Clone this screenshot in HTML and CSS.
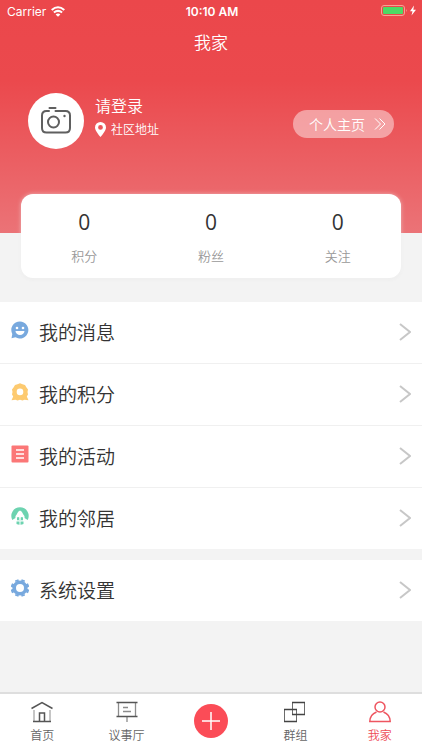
FILE: index.html
```html
<!DOCTYPE html>
<html lang="zh-CN">
<head>
    <meta charset="UTF-8">
    <meta name="viewport" content="width=device-width, initial-scale=1.0">
    <title>我家</title>
    <link rel="stylesheet" href="styles.css">
</head>
<body>

<header class="header">
    <div class="status-bar">
        <div class="status-left">
            <span>Carrier</span>
            <svg width="14" height="11" viewBox="0 0 14 11" fill="none" stroke="#fff" stroke-width="2">
                <path d="M0.700 4Q7-1.500 13.300 4"/>
                <path d="M2.900 6.600Q7 3.100 11.100 6.600"/>
                <path d="M7 10.800L4.600 8.400Q7 6.600 9.400 8.400Z" fill="#fff" stroke="none"/>
            </svg>
        </div>
        <strong class="status-time">10:10 AM</strong>
        <div class="status-right">
            <svg width="36" height="12" viewBox="0 0 36 12">
                <rect x="0.5" y="0.5" width="23" height="10" rx="2.5" fill="none" stroke="#f6a293"/>
                <rect x="2" y="2" width="20" height="7" rx="1" fill="#4cd964"/>
                <path d="M25 4q1.500 1.500 0 3z" fill="#f6a293"/>
                <path d="M33 0.500L29 6.200h2.500L30.500 10.500L35 4.700h-2.700z" fill="#fff"/>
            </svg>
        </div>
    </div>
    <h1>我家</h1>

    <div class="profile">
        <button class="avatar" aria-label="头像">
            <svg width="32" height="28" viewBox="0 0 32 28" fill="none" stroke="#5f5f5f" stroke-width="2" stroke-linecap="round">
                <path d="M9 4H6.500Q2 4 2 8.500v12.500q0 4.500 4.500 4.500h19q4.500 0 4.500-4.500V8.500Q30 4 25.500 4H15.500"/>
                <path d="M9.500 1h6"/>
                <circle cx="13.500" cy="15" r="5.500"/>
                <circle cx="24.500" cy="9" r="1.200" fill="#5f5f5f" stroke="none"/>
            </svg>
        </button>
        <div class="profile-info">
            <a href="#" class="login">请登录</a>
            <div class="address">
                <svg width="11" height="15" viewBox="0 0 11 15">
                    <path fill="#fff" fill-rule="evenodd" d="M5.500 0A5.500 5.500 0 0 0 0 5.500C0 9 5.500 15 5.500 15S11 9 11 5.500A5.500 5.500 0 0 0 5.500 0zM5.500 3a2.400 2.400 0 1 1 0 4.800a2.400 2.400 0 0 1 0-4.800z"/>
                </svg>
                <span>社区地址</span>
            </div>
        </div>
        <a href="#" class="home-link">
            个人主页
            <svg width="12" height="12" viewBox="0 0 12 12" fill="none" stroke="#fff">
                <path d="M1 0.500L6.500 6L1 11.500M5.500 0.500L11 6L5.500 11.500"/>
            </svg>
        </a>
    </div>
</header>

<main>
    <section class="stats">
        <div class="stat"><span class="stat-num">0</span><span class="stat-name">积分</span></div>
        <div class="stat"><span class="stat-num">0</span><span class="stat-name">粉丝</span></div>
        <div class="stat"><span class="stat-num">0</span><span class="stat-name">关注</span></div>
    </section>

    <nav class="menu">
        <a href="#">
            <svg class="icon" viewBox="0 0 18 18">
                <path fill="#78a9de" d="M9 0.500a8.500 8.500 0 1 1-4.500 15.800L0.500 17.300L1.300 13A8.500 8.500 0 0 1 9 0.500z"/>
                <circle cx="6" cy="7" r="1.300" fill="#fff"/>
                <circle cx="12" cy="7" r="1.300" fill="#fff"/>
                <path fill="#fff" d="M4.500 10h9a4.500 4 0 0 1-9 0z"/>
            </svg>
            <span>我的消息</span>
            <svg class="arrow" viewBox="0 0 12 18"><path d="M1 1L11 9L1 17"/></svg>
        </a>
        <a href="#">
            <svg class="icon" viewBox="0 0 18 18">
                <path fill="#fdca70" fill-rule="evenodd" d="M6.500 1.300L9 0.300L11.500 1.300L14 2L15.300 4.300L17 6.500L16.500 9L17 11.500L15.800 13.500L17.500 17.300L13.500 16.800L11.500 17.500L9 16.800L6.500 17.500L4.500 16.800L0.500 17.300L2.200 13.500L1 11.500L1.500 9L1 6.500L2.700 4.300L4 2zM9 5.600a3.300 3.300 0 1 0 0 6.600a3.300 3.300 0 0 0 0-6.600z"/>
            </svg>
            <span>我的积分</span>
            <svg class="arrow" viewBox="0 0 12 18"><path d="M1 1L11 9L1 17"/></svg>
        </a>
        <a href="#">
            <svg class="icon" viewBox="0 0 18 18">
                <rect x="0.500" y="0.500" width="17" height="17" rx="1" fill="#fb7777"/>
                <path stroke="#fff" stroke-width="1.300" d="M5 5h8M5 9h8M5 13h8"/>
            </svg>
            <span>我的活动</span>
            <svg class="arrow" viewBox="0 0 12 18"><path d="M1 1L11 9L1 17"/></svg>
        </a>
        <a href="#">
            <svg class="icon" viewBox="0 0 18 18">
                <path fill="#6dd3b0" d="M1.300 13A8.700 8.700 0 1 1 16.700 13L13.500 11Q14 9 12.300 7.500Q11 4 9 3.500Q7 4 5.700 7.500Q4 9 4.500 11z"/>
                <path fill="#6dd3b0" d="M6 10.500Q7 9.500 8.300 10.500V13H9.700V10.500Q11 9.500 12 10.500V13.200H6zM5.500 14.500H8.500V17.800Q7 17.800 5.500 17zM9.500 14.500H12.500V17Q11 17.800 9.500 17.800z"/>
            </svg>
            <span>我的邻居</span>
            <svg class="arrow" viewBox="0 0 12 18"><path d="M1 1L11 9L1 17"/></svg>
        </a>
    </nav>

    <nav class="menu">
        <a href="#">
            <svg class="icon" viewBox="0 0 18 18">
                <circle cx="9" cy="9" r="5.800" fill="none" stroke="#78a9de" stroke-width="3.600"/>
                <path stroke="#78a9de" stroke-width="3.600" d="M6.200 2.500L5.600 0.800M11.800 2.500L12.400 0.800M6.200 15.500L5.600 17.200M11.800 15.500L12.400 17.200M2.500 7L0.300 6M2.500 11.500L0.300 12.500M15.500 7L17.700 6M15.500 11.500L17.700 12.500"/>
            </svg>
            <span>系统设置</span>
            <svg class="arrow" viewBox="0 0 12 18"><path d="M1 1L11 9L1 17"/></svg>
        </a>
    </nav>
</main>

<nav class="tab-bar">
    <a href="#">
        <svg viewBox="0 0 24 24" fill="none" stroke="#8c8c8c">
            <path d="M4 10v12M20 10v12"/>
            <path stroke="#555" stroke-width="1.500" d="M1.500 8.500L12 2.500L22.500 8.500M3 21.500h18M9.500 21v-8h5v8"/>
        </svg>
        <span>首页</span>
    </a>
    <a href="#">
        <svg viewBox="0 0 24 24" fill="none" stroke="#8c8c8c">
            <path d="M3.500 3v13M20.500 3v13M8 7.500h5M8 11.500h8M12 16v6" stroke-width="1.300"/>
            <path stroke="#555" stroke-width="1.500" d="M1.500 2.500h21M1.500 16.500h21"/>
        </svg>
        <span>议事厅</span>
    </a>
    <a href="#" class="add" aria-label="发布">
        <svg viewBox="0 0 34 34">
            <circle cx="17" cy="17" r="17" fill="#fb4c57"/>
            <path stroke="#fff" stroke-width="1.500" d="M8 17h18M17 8v18"/>
        </svg>
    </a>
    <a href="#">
        <svg viewBox="0 0 24 24" fill="none" stroke="#6c6c6c">
            <path d="M9.500 2v13M21.500 2v13M1.500 9v13M13.500 9v13"/>
            <path stroke="#444" stroke-width="1.500" d="M9 2.500h13M9 14.500h13M1 9.500h13M1 21.500h13"/>
        </svg>
        <span>群组</span>
    </a>
    <a href="#" class="active">
        <svg viewBox="0 0 24 24" fill="none" stroke="#ee5560" stroke-width="1.500">
            <circle cx="12" cy="7" r="5"/>
            <path d="M8.500 12Q2 14.500 1.800 21.500H22.200Q22 14.500 15.500 12"/>
        </svg>
        <span>我家</span>
    </a>
</nav>

</body>
</html>
```
FILE: styles.css
```css
* {
    box-sizing: border-box;
}

body {
    background-color: #f3f3f3;
    color: #333;
    font-family: "Noto Sans CJK SC", sans-serif;
    font-weight: 350;
    margin: 0;
    min-height: 100vh;
    display: flex;
    flex-direction: column;
}

a {
    color: inherit;
    text-decoration: none;
}

svg {
    display: block;
    flex: none;
}

.header {
    background: linear-gradient(#eb474b 0, #eb494d 35%, #eb7377 100%);
    color: #fff;
    height: 233px;
}

.status-bar {
    display: grid;
    grid-template-columns: 1fr auto 1fr;
    align-items: center;
    height: 22px;
    padding: 0 5px 0 7px;
    font-family: Inter, sans-serif;
    font-size: 12px;
    font-weight: 400;
}

.status-left {
    display: flex;
    align-items: center;
    gap: 5px;
}

.status-time {
    font-weight: 600;
}

.status-right {
    justify-self: end;
}

h1 {
    margin: 0;
    font-size: 17px;
    font-weight: 350;
    line-height: 40px;
    text-align: center;
}

.profile {
    display: flex;
    align-items: center;
    padding: 31px 28px 0;
}

.avatar {
    display: flex;
    align-items: center;
    justify-content: center;
    width: 56px;
    height: 56px;
    padding: 0;
    border: none;
    border-radius: 50%;
    background-color: #fff;
}

.profile-info {
    flex: 1;
    margin-left: 11px;
    padding-bottom: 8px;
}

.login {
    display: block;
    font-size: 16px;
    line-height: 24px;
}

.address {
    display: flex;
    align-items: center;
    gap: 5px;
    font-size: 12px;
    line-height: 24px;
}

.home-link {
    display: flex;
    align-items: center;
    gap: 9px;
    height: 28px;
    margin-top: 6px;
    padding: 0 8px 0 16px;
    border-radius: 14px;
    background-color: rgba(255, 255, 255, 0.45);
    font-size: 14px;
}

.stats {
    position: relative;
    display: flex;
    height: 84px;
    margin: -39px 21px 24px;
    padding-top: 14px;
    border-radius: 12px;
    background-color: #fff;
    box-shadow: 0 0 4px rgba(255, 255, 255, 0.5), 0 1px 4px rgba(0, 0, 0, 0.05);
}

.stat {
    flex: 1;
    text-align: center;
}

.stat-num {
    display: block;
    font-family: "Open Sans", sans-serif;
    font-size: 21px;
    font-weight: 400;
    line-height: 28px;
}

.stat-name {
    display: block;
    margin-top: 10px;
    color: #999;
    font-size: 13px;
    line-height: 20px;
}

.menu {
    margin-bottom: 11px;
    background-color: #fff;
}

.menu a {
    display: flex;
    align-items: center;
    height: 61px;
    padding: 0 11px 2px;
    font-size: 19px;
}

.menu a + a {
    height: 62px;
    border-top: 1px solid #f0f0f0;
}

.menu span {
    flex: 1;
    margin-left: 10px;
}

.icon {
    width: 18px;
    height: 18px;
    margin-bottom: 4px;
}

.arrow {
    width: 12px;
    height: 18px;
    fill: none;
    stroke: #c7c7c7;
    stroke-width: 2;
}

.tab-bar {
    display: flex;
    height: 58px;
    margin-top: auto;
    border-top: 2px solid #dedede;
    background-color: #fff;
    color: #666;
    font-size: 12px;
    line-height: 18px;
}

.tab-bar a {
    flex: 1;
    display: flex;
    flex-direction: column;
    align-items: center;
    padding-top: 6px;
    gap: 2px;
}

.tab-bar svg {
    width: 24px;
    height: 24px;
}

.tab-bar .add {
    padding-top: 10px;
}

.tab-bar .add svg {
    width: 34px;
    height: 34px;
}

.tab-bar .active {
    color: #ee4b55;
}
```
